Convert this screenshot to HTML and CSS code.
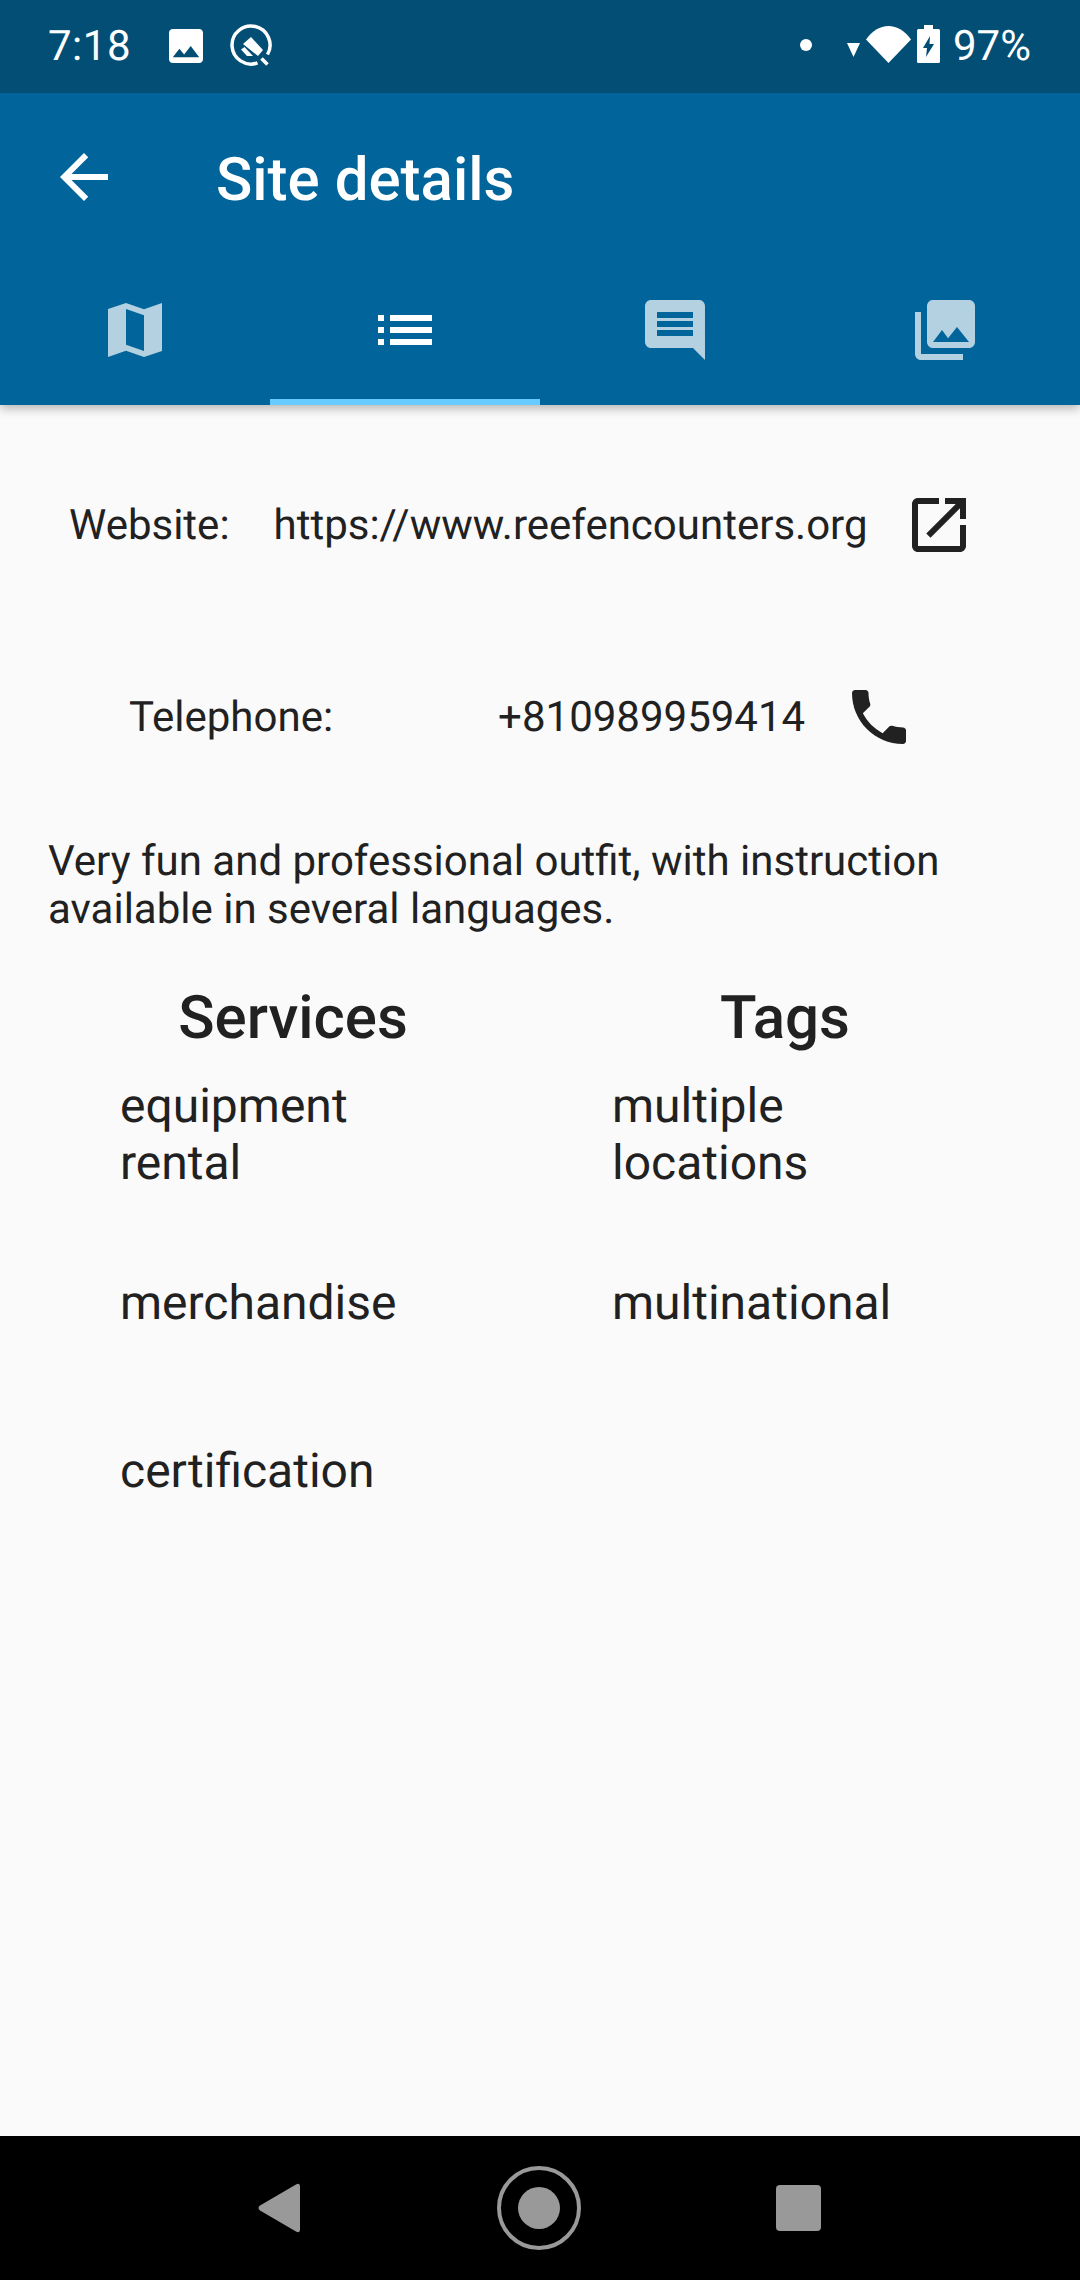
FILE: index.html
```html
<!DOCTYPE html>
<html lang="en">
<head>
<meta charset="utf-8">
<title>Site details</title>
<link rel="stylesheet" href="styles.css">
</head>
<body>
<div class="screen">
  <header class="appbar">
    <div class="status">
      <div class="status-left">
        <span class="clock">7:18</span>
        <svg class="st-image" viewBox="3 3 18 18"><path d="M21 19V5c0-1.1-.9-2-2-2H5c-1.1 0-2 .9-2 2v14c0 1.1.9 2 2 2h14c1.1 0 2-.9 2-2zM8.5 13.5l2.5 3.01L14.5 12l4.5 6H5l3.5-4.5z"/></svg>
        <svg class="st-q" viewBox="0 0 42 44"><path class="q-ring" d="M27.500 38.900A19 19 0 1 1 37.500 30.500"/><path class="q-tail" d="M31.500 34.500l6 6"/><path d="M13 20l8-7 12 13-5 6z"/><path d="M11 25.500l3.500-2.500 8.500 9h-6z"/></svg>
      </div>
      <div class="status-right">
        <span class="st-dot"></span>
        <svg class="st-signal" viewBox="0 0 13 14"><path d="M0 0h13L6.500 14z"/></svg>
        <svg class="st-wifi" viewBox="0 0 45 37"><path d="M0 13.500C6 5 14 0 22.500 0S39 5 45 13.500L22.500 37z"/></svg>
        <svg class="st-batt" viewBox="0 0 23 38"><path fill-rule="evenodd" d="M7 0h9v4h5.500q1.500 0 1.500 1.500V36.500q0 1.500-1.500 1.500H1.500Q0 38 0 36.500V5.500Q0 4 1.500 4H7zM13 11L6 23h4l-1 9 8-13h-4.500z"/></svg>
        <span class="pct">97%</span>
      </div>
    </div>
    <div class="toolbar">
      <svg class="back" viewBox="0 0 24 24"><path d="M20 11H7.830l5.590-5.590L12 4l-8 8 8 8 1.410-1.410L7.830 13H20v-2z"/></svg>
      <h1 class="title">Site details</h1>
    </div>
    <nav class="tabs">
      <div class="tab">
        <svg class="tab-icon" viewBox="0 0 24 24"><path d="M21 3l-6 2.100L9 3 3 5v16l6-2.100 6 2.100 6-2zM15 19l-6-2.110V5l6 2.110z" fill-rule="evenodd"/></svg>
      </div>
      <div class="tab tab-active">
        <svg class="tab-icon" viewBox="0 0 24 24"><path d="M3 13h2v-2H3v2zm0 4h2v-2H3v2zm0-8h2V7H3v2zm4 4h14v-2H7v2zm0 4h14v-2H7v2zM7 7v2h14V7H7z"/></svg>
      </div>
      <div class="tab">
        <svg class="tab-icon" viewBox="0 0 24 24"><path d="M21.990 4c0-1.100-.890-2-1.990-2H4c-1.100 0-2 .900-2 2v12c0 1.100.900 2 2 2h14l4 4-.010-18zM18 14H6v-2h12v2zm0-3H6V9h12v2zm0-3H6V6h12v2z"/></svg>
      </div>
      <div class="tab">
        <svg class="tab-icon" viewBox="0 0 24 24"><path d="M22 16V4c0-1.100-.900-2-2-2H8c-1.100 0-2 .900-2 2v12c0 1.100.900 2 2 2h12c1.100 0 2-.900 2-2zm-11-4l2.030 2.710L16 11l4 5H8l3-4zM2 6v14c0 1.100.900 2 2 2h14v-2H4V6H2z"/></svg>
      </div>
    </nav>
  </header>

  <main class="content">
    <div class="contact contact-web">
      <span class="web-label">Website:</span>
      <span class="web-value">https://www.reefencounters.org</span>
      <svg class="action" viewBox="0 0 24 24"><path d="M19 19H5V5h7V3H5c-1.110 0-2 .900-2 2v14c0 1.100.890 2 2 2h14c1.100 0 2-.900 2-2v-7h-2v7zM14 3v2h3.590l-9.830 9.830 1.410 1.410L19 6.410V10h2V3h-7z"/></svg>
    </div>
    <div class="contact contact-tel">
      <span class="tel-label">Telephone:</span>
      <span class="tel-value">+810989959414</span>
      <svg class="action" viewBox="0 0 24 24"><path d="M6.620 10.790c1.440 2.830 3.760 5.140 6.590 6.590l2.200-2.200c.270-.270.670-.360 1.020-.240 1.120.370 2.330.570 3.570.570.550 0 1 .450 1 1V20c0 .550-.450 1-1 1-9.390 0-17-7.610-17-17 0-.550.450-1 1-1h3.500c.550 0 1 .450 1 1 0 1.250.200 2.450.570 3.570.110.350.030.740-.250 1.020l-2.200 2.200z"/></svg>
    </div>
    <p class="description">Very fun and professional outfit, with instruction available in several languages.</p>
    <section class="lists">
      <h2 class="list-head">Services</h2>
      <h2 class="list-head">Tags</h2>
      <div class="item"><span>equipment rental</span></div>
      <div class="item"><span>multiple locations</span></div>
      <div class="item"><span>merchandise</span></div>
      <div class="item"><span>multinational</span></div>
      <div class="item"><span>certification</span></div>
    </section>
  </main>

  <footer class="navbar">
    <svg class="nav-back" viewBox="0 0 42 50"><path d="M38 1.500q4-2 4 2v43q0 4-4 2L2 27.500q-3-2.500 0-5z"/></svg>
    <svg class="nav-home" viewBox="0 0 84 84"><circle class="home-ring" cx="42" cy="42" r="40"/><circle cx="42" cy="42" r="21"/></svg>
    <span class="nav-recent"></span>
  </footer>
</div>
</body>
</html>
```

FILE: styles.css
```css
* { box-sizing: border-box; }
html, body { margin: 0; padding: 0; }
body { font-family: Roboto, "Liberation Sans", sans-serif; background: #fafafa; color: #212121; text-rendering: geometricPrecision; }
.screen { width: 1080px; height: 2280px; display: flex; flex-direction: column; overflow: hidden; }

.appbar { background: #01659b; color: #fff; box-shadow: 0 3px 10px rgba(0,0,0,.3); position: relative; z-index: 1; flex: none; }
.status { height: 93px; background: #024e75; display: flex; justify-content: space-between; align-items: center; padding: 0 49px 0 48px; }
.status-left, .status-right { display: flex; align-items: center; }
.status svg { fill: #fff; display: block; flex: none; }
.clock, .pct { font-size: 42px; line-height: 48px; }
.clock { letter-spacing: .5px; }
.st-image { width: 34px; height: 34px; margin-left: 38px; margin-top: -2px; }
.st-q { width: 42px; height: 44px; margin-left: 27px; margin-top: -2px; }
.status .q-ring, .status .q-tail { fill: none; stroke: #fff; stroke-width: 3.5; }
.st-dot { width: 12px; height: 12px; border-radius: 50%; background: #fff; margin-top: -3px; }
.st-signal { width: 13px; height: 14px; margin-left: 35px; margin-top: 7px; }
.st-wifi { width: 45px; height: 37px; margin-left: 6px; margin-top: -4px; }
.st-batt { width: 23px; height: 38px; margin-left: 6px; margin-top: -5px; }
.pct { margin-left: 13px; }

.toolbar { height: 174px; display: flex; align-items: flex-start; padding-left: 48px; }
.back { width: 72px; height: 72px; fill: #fff; margin-top: 48px; flex: none; }
.title { margin: 0 0 0 96px; font-size: 60px; line-height: 70px; font-weight: 500; padding-top: 52px; }

.tabs { display: flex; height: 138px; }
.tab { flex: 1; display: flex; justify-content: center; padding-top: 27px; height: 138px; border-bottom: 6px solid transparent; }
.tab-active { border-bottom-color: #66ccff; }
.tab-icon { width: 72px; height: 72px; fill: #fff; fill-opacity: .7; display: block; }
.tab-active .tab-icon { fill-opacity: 1; }

.content { flex: 1; min-height: 0; }
.contact { display: flex; align-items: center; font-size: 42px; height: 72px; }
.action { width: 72px; height: 72px; fill: #212121; flex: none; display: block; }
.contact-web { margin-top: 84px; padding-left: 69px; }
.web-value { margin-left: 44px; }
.contact-web .action { margin-left: 35px; }
.contact-tel { margin-top: 120px; padding-left: 129px; }
.tel-value { margin-left: 165px; }
.contact-tel .action { margin-left: 38px; }
.description { margin: 85px 48px 0; font-size: 42px; line-height: 48px; }

.lists { display: grid; grid-template-columns: 492px 492px; margin: 32px 0 0 48px; }
.list-head { margin: 0; text-align: center; font-size: 60px; line-height: 66px; font-weight: 500; height: 84px; padding: 19px 2px 0 0; }
.item { height: 168px; display: flex; align-items: center; padding-left: 72px; padding-right: 120px; font-size: 48px; line-height: 57px; }

.navbar { height: 144px; flex: none; background: #000; display: flex; justify-content: space-between; align-items: center; padding: 0 259px 0 258px; }
.nav-back { width: 42px; height: 50px; fill: #999; display: block; }
.nav-home { width: 84px; height: 84px; fill: #999; display: block; margin-left: 2px; }
.home-ring { fill: none; stroke: #999; stroke-width: 4; }
.nav-recent { width: 45px; height: 46px; background: #999; border-radius: 4px; display: block; }
```
